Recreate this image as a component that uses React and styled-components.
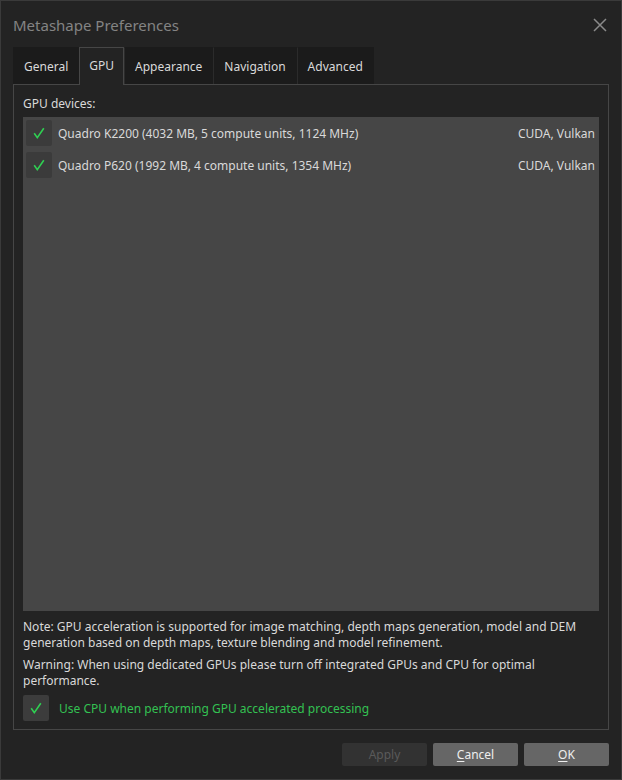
import styled, { createGlobalStyle } from 'styled-components';

const GlobalStyle = createGlobalStyle`
  html, body {
    margin: 0;
    padding: 0;
    background: #232323;
  }
  * {
    box-sizing: border-box;
  }
`;

const Window = styled.div`
  width: 622px;
  height: 780px;
  display: flex;
  flex-direction: column;
  background: #232323;
  border: 1px solid #3a3a3a;
  font-family: 'Noto Sans', 'Open Sans', sans-serif;
  font-size: 12px;
  color: #d9d9d9;
`;

const TitleBar = styled.div`
  height: 46px;
  display: flex;
  align-items: center;
  justify-content: space-between;
  padding: 2px 14px 0 12px;
`;

const Title = styled.span`
  font-size: 15px;
  color: #848484;
`;

const CloseButton = styled.button`
  background: none;
  border: none;
  padding: 0;
  width: 14px;
  height: 14px;
  display: flex;
  cursor: pointer;
`;

const TabBar = styled.div`
  display: flex;
  height: 37px;
  margin: 0 12px;
`;

const Tab = styled.div`
  padding: ${(p) => (p.$active ? '0 9px 2px' : '0 10px')};
  display: flex;
  align-items: center;
  background: ${(p) => (p.$active ? '#232323' : '#1b1b1b')};
  border: 1px solid ${(p) => (p.$active ? '#464646' : '#1b1b1b')};
  border-left-color: ${(p) => (p.$active ? '#464646' : '#2b2b2b')};
  border-bottom: none;
  margin-bottom: ${(p) => (p.$active ? '-1px' : '0')};
  position: relative;
  z-index: ${(p) => (p.$active ? 1 : 0)};
  color: #d9d9d9;
  &:first-child {
    border-left-color: ${(p) => (p.$active ? '#464646' : '#1b1b1b')};
  }
`;

const Pane = styled.div`
  flex: 1;
  margin: 0 12px;
  border: 1px solid #464646;
  padding: 10px 9px 8px;
  display: flex;
  flex-direction: column;
  line-height: 17px;
`;

const Label = styled.div`
  margin-bottom: 5px;
`;

const DeviceList = styled.div`
  height: 494px;
  background: #464646;
  padding: 3px 4px 0 3px;
  display: flex;
  flex-direction: column;
  gap: 6px;
`;

const DeviceRow = styled.div`
  display: flex;
  align-items: center;
  height: 26px;
  gap: 6px;
  padding-top: 1px;
`;

const DeviceName = styled.span`
  flex: 1;
`;

const Api = styled.span`
  color: #d9d9d9;
`;

const Box = styled.span`
  width: 26px;
  height: 26px;
  flex: none;
  align-self: ${(p) => (p.$top ? 'flex-start' : 'center')};
  margin-top: ${(p) => (p.$top ? '-1px' : '0')};
  border-radius: 2px;
  background: ${(p) => p.$bg || '#3b3b3b'};
  display: flex;
  align-items: center;
  justify-content: center;
`;

const Note = styled.p`
  margin: ${(p) => (p.$first ? '8px' : '6px')} 0 0;
  line-height: 16px;
`;

const CpuOption = styled.label`
  display: flex;
  align-items: center;
  gap: 10px;
  margin-top: 6px;
  color: #33c152;
  height: 26px;
`;

const Footer = styled.div`
  height: 49px;
  display: flex;
  justify-content: flex-end;
  align-items: flex-start;
  gap: 6px;
  padding: 13px 12px 0;
`;

const Button = styled.button`
  width: 85px;
  height: 23px;
  border: none;
  border-radius: 2px;
  font-family: inherit;
  font-size: 12px;
  background: ${(p) => (p.disabled ? '#323232' : '#666666')};
  color: ${(p) => (p.disabled ? '#5a5a5a' : '#eeeeee')};
  padding: 0;
  u {
    text-underline-offset: 2px;
  }
`;

const Check = () => (
  <svg width="12" height="12" viewBox="0 0 12 12">
    <path d="M1.2 6.3 L4.3 10.6 L10.8 1.2" fill="none" stroke="#2fd052" strokeWidth="1.6" />
  </svg>
);

const devices = [
  { name: 'Quadro K2200 (4032 MB, 5 compute units, 1124 MHz)', api: 'CUDA, Vulkan' },
  { name: 'Quadro P620 (1992 MB, 4 compute units, 1354 MHz)', api: 'CUDA, Vulkan' },
];

const tabs = ['General', 'GPU', 'Appearance', 'Navigation', 'Advanced'];

export default function App() {
  return (
    <>
      <GlobalStyle />
      <Window>
        <TitleBar>
          <Title>Metashape Preferences</Title>
          <CloseButton type="button" aria-label="Close">
            <svg width="14" height="14" viewBox="0 0 14 14">
              <path d="M1 1 L13 13 M13 1 L1 13" stroke="#8a8a8a" strokeWidth="1.5" />
            </svg>
          </CloseButton>
        </TitleBar>
        <TabBar>
          {tabs.map((t) => (
            <Tab key={t} $active={t === 'GPU'}>
              {t}
            </Tab>
          ))}
        </TabBar>
        <Pane>
          <Label>GPU devices:</Label>
          <DeviceList>
            {devices.map((d) => (
              <DeviceRow key={d.name}>
                <Box $top>
                  <Check />
                </Box>
                <DeviceName>{d.name}</DeviceName>
                <Api>{d.api}</Api>
              </DeviceRow>
            ))}
          </DeviceList>
          <Note $first>
            Note: GPU acceleration is supported for image matching, depth maps generation, model and DEM
            generation based on depth maps, texture blending and model refinement.
          </Note>
          <Note>
            Warning: When using dedicated GPUs please turn off integrated GPUs and CPU for optimal
            performance.
          </Note>
          <CpuOption>
            <Box $bg="#3c3c3c">
              <Check />
            </Box>
            Use CPU when performing GPU accelerated processing
          </CpuOption>
        </Pane>
        <Footer>
          <Button type="button" disabled>
            Apply
          </Button>
          <Button type="button">
            <u>C</u>ancel
          </Button>
          <Button type="button">
            <u>O</u>K
          </Button>
        </Footer>
      </Window>
    </>
  );
}
